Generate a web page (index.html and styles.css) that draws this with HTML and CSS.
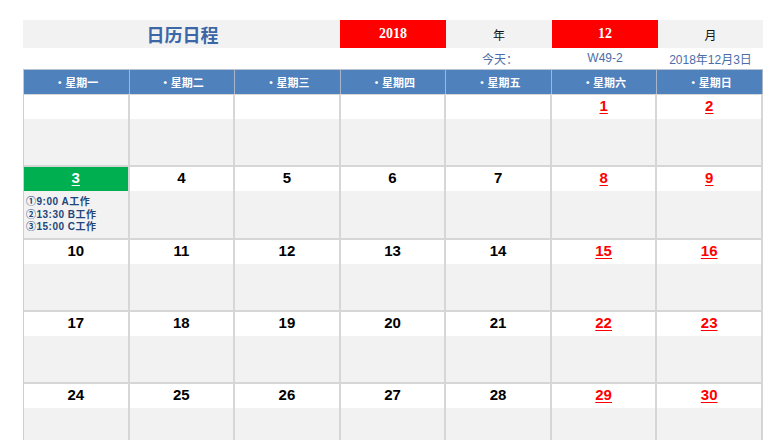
FILE: index.html
```html
<!DOCTYPE html>
<html lang="zh">
<head>
<meta charset="utf-8">
<link rel="stylesheet" href="styles.css">
</head>
<body>
<div class="page">
  <div class="top">
    <div class="title">日历日程</div>
    <div class="red">2018</div>
    <div class="grey">年</div>
    <div class="red">12</div>
    <div class="grey">月</div>
  </div>
  <div class="today">
    <div class="t-label">今天：</div>
    <div>W49-2</div>
    <div>2018年12月3日</div>
  </div>
  <div class="head">
    <div>·星期一</div><div>·星期二</div><div>·星期三</div><div>·星期四</div><div>·星期五</div><div>·星期六</div><div>·星期日</div>
  </div>
  <div class="cal">
    <div class="cell"><div class="d"></div></div>
    <div class="cell"><div class="d"></div></div>
    <div class="cell"><div class="d"></div></div>
    <div class="cell"><div class="d"></div></div>
    <div class="cell"><div class="d"></div></div>
    <div class="cell"><div class="d we">1</div></div>
    <div class="cell"><div class="d we">2</div></div>

    <div class="cell"><div class="d now">3</div>
      <div class="ev">①9:00 A工作<br>②13:30 B工作<br>③15:00 C工作</div></div>
    <div class="cell"><div class="d">4</div></div>
    <div class="cell"><div class="d">5</div></div>
    <div class="cell"><div class="d">6</div></div>
    <div class="cell"><div class="d">7</div></div>
    <div class="cell"><div class="d we">8</div></div>
    <div class="cell"><div class="d we">9</div></div>

    <div class="cell"><div class="d">10</div></div>
    <div class="cell"><div class="d">11</div></div>
    <div class="cell"><div class="d">12</div></div>
    <div class="cell"><div class="d">13</div></div>
    <div class="cell"><div class="d">14</div></div>
    <div class="cell"><div class="d we">15</div></div>
    <div class="cell"><div class="d we">16</div></div>

    <div class="cell"><div class="d">17</div></div>
    <div class="cell"><div class="d">18</div></div>
    <div class="cell"><div class="d">19</div></div>
    <div class="cell"><div class="d">20</div></div>
    <div class="cell"><div class="d">21</div></div>
    <div class="cell"><div class="d we">22</div></div>
    <div class="cell"><div class="d we">23</div></div>

    <div class="cell"><div class="d">24</div></div>
    <div class="cell"><div class="d">25</div></div>
    <div class="cell"><div class="d">26</div></div>
    <div class="cell"><div class="d">27</div></div>
    <div class="cell"><div class="d">28</div></div>
    <div class="cell"><div class="d we">29</div></div>
    <div class="cell"><div class="d we">30</div></div>
  </div>
</div>
</body>
</html>
```

FILE: styles.css
```css
html, body {
  margin: 0;
  padding: 0;
  background: #ffffff;
  overflow: hidden;
}
body {
  font-family: "Liberation Sans", "Noto Sans CJK SC", sans-serif;
}
.page {
  width: 740px;
  margin-left: 23px;
  padding-top: 20px;
}
.top {
  display: grid;
  grid-template-columns: 317px 106px 106px 106px 105px;
  height: 28px;
}
.top > div {
  display: flex;
  align-items: center;
  justify-content: center;
}
.title {
  background: #f2f2f2;
  color: #3b67a6;
  font-family: "Noto Sans CJK SC", sans-serif;
  font-weight: bold;
  font-size: 18px;
  padding-left: 2px;
}
.red {
  background: #ff0000;
  color: #ffffff;
  font-family: "Liberation Serif", serif;
  font-weight: bold;
  font-size: 14px;
}
.grey {
  background: #f2f2f2;
  color: #111111;
  font-family: "Noto Sans CJK SC", sans-serif;
  font-size: 12px;
}
.today {
  display: grid;
  grid-template-columns: 106px 106px 105px;
  margin-left: 423px;
  height: 21px;
  color: #4a6ea8;
  font-family: "Liberation Sans", "Noto Sans CJK SC", sans-serif;
  font-size: 12px;
}
.today > div {
  display: flex;
  align-items: center;
  justify-content: center;
  padding-bottom: 1px;
}
.t-label {
  font-family: "Noto Sans CJK SC", sans-serif;
  padding-left: 2px;
}
.head {
  display: grid;
  grid-template-columns: repeat(7, 1fr);
  height: 24px;
  background: #4f81bd;
  border-top: 1px solid #b9c3d2;
  border-left: 1px solid #c8c8c8;
}
.head > div {
  display: flex;
  align-items: center;
  justify-content: center;
  color: #ffffff;
  font-family: "Noto Sans CJK SC", sans-serif;
  font-weight: bold;
  font-size: 11px;
  border-right: 1px solid #a9b5c8;
}
.cal {
  display: grid;
  grid-template-columns: repeat(7, 1fr);
  grid-auto-rows: 70.3px;
  gap: 2px;
  background: #d6d6d6;
  border-left: 1px solid #cfcfcf;
  border-top: 1px solid #d6d6d6;
  padding-right: 2px;
}
.cell {
  background: #f2f2f2;
  display: flex;
  flex-direction: column;
}
.d {
  height: 24px;
  background: #ffffff;
  color: #000000;
  font-weight: bold;
  font-size: 15px;
  line-height: 21px;
  text-align: center;
}
.d.we {
  color: #ff0000;
  text-decoration: underline;
  text-underline-offset: 2px;
}
.d.now {
  background: #00b050;
  color: #ffffff;
  text-decoration: underline;
  text-underline-offset: 2px;
}
.ev {
  padding: 5px 0 0 2px;
  color: #23467a;
  font-family: "Liberation Sans", "Noto Sans CJK SC", sans-serif;
  font-weight: bold;
  font-size: 10px;
  line-height: 12.5px;
  letter-spacing: 0.5px;
}
```
